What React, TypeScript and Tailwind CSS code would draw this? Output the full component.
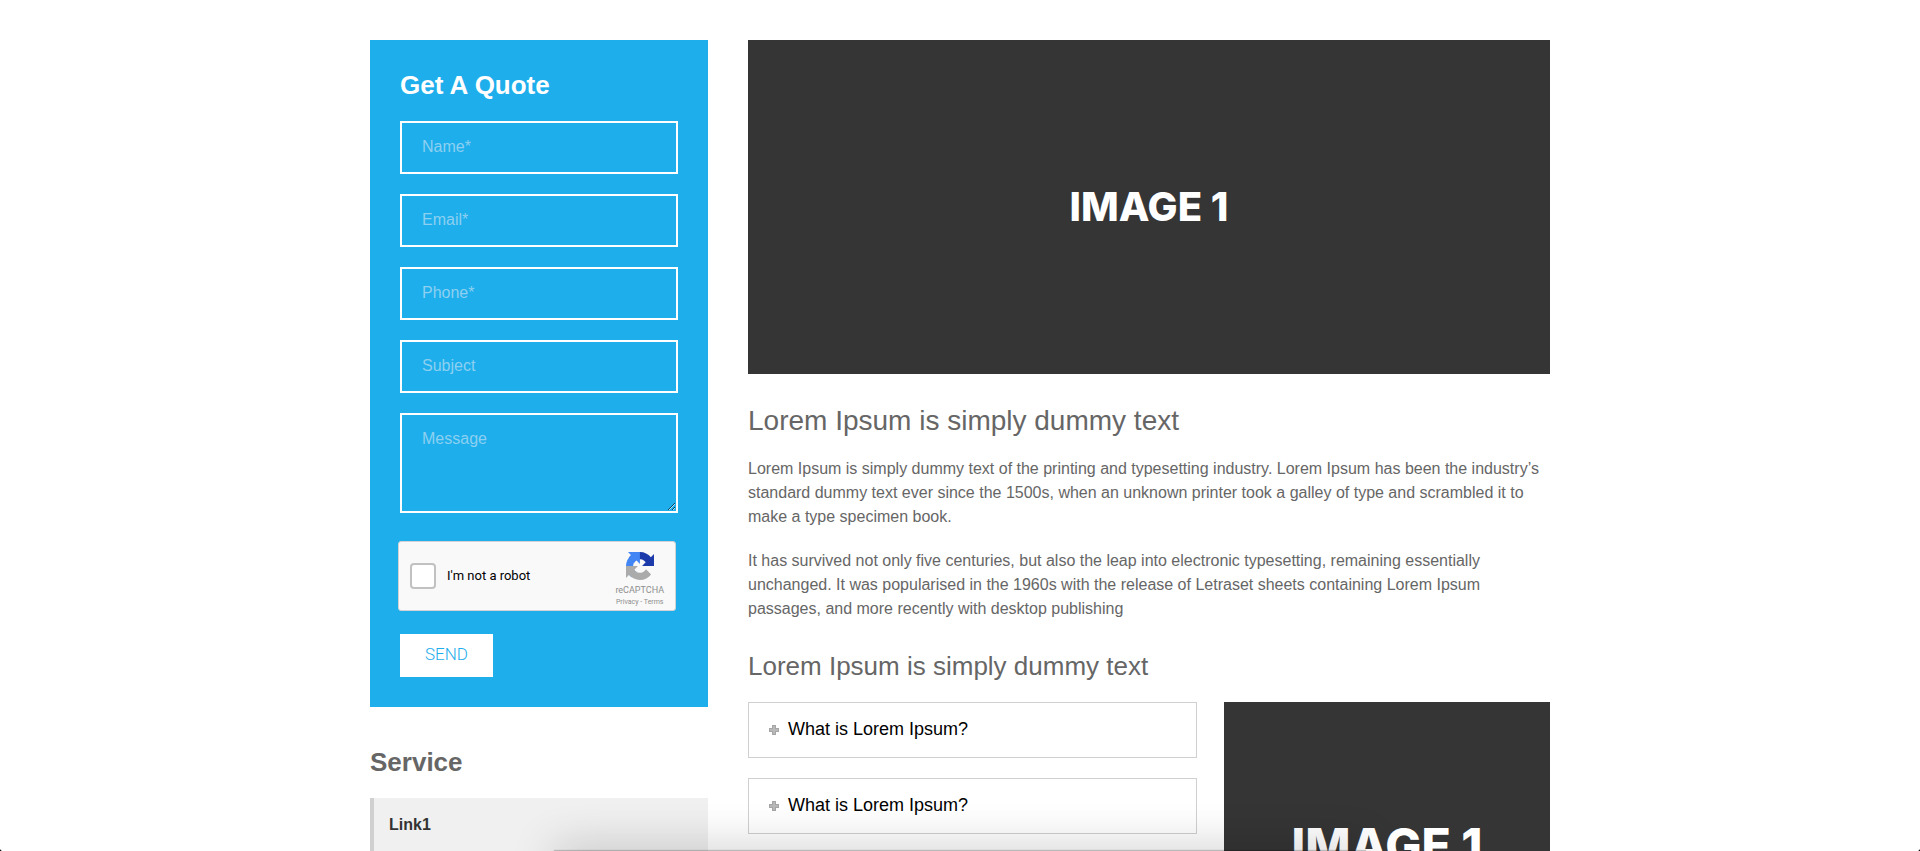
import type { ReactNode } from "react";

const fields = [
  { id: "name", label: "Name*", type: "text" },
  { id: "email", label: "Email*", type: "email" },
  { id: "phone", label: "Phone*", type: "tel" },
  { id: "subject", label: "Subject", type: "text" },
];

const fieldStyle =
  "block w-full border-2 border-white bg-transparent px-5 text-base text-white placeholder:text-[#8dd0f0] outline-none";

function RecaptchaLogo() {
  return (
    <svg viewBox="0 0 64 64" className="size-7" aria-hidden="true">
      <path
        fill="#1c3aa9"
        d="M64 31.955l-.033-1.37V4.687l-7.16 7.16C50.948 4.674 42.033.093 32.05.093c-10.4 0-19.622 4.96-25.458 12.64l11.736 11.86a15.55 15.55 0 0 1 4.754-5.334c2.05-1.6 4.952-2.906 8.968-2.906.485 0 .86.057 1.135.163 4.976.393 9.288 3.14 11.828 7.124l-8.307 8.307L64 31.953"
      />
      <path
        fill="#4285f4"
        d="M31.862.094l-1.37.033H4.594l7.16 7.16C4.58 13.147 0 22.06 0 32.046c0 10.4 4.96 19.622 12.64 25.458L24.5 45.768a15.55 15.55 0 0 1-5.334-4.754c-1.6-2.05-2.906-4.952-2.906-8.968 0-.485.057-.86.163-1.135.393-4.976 3.14-9.288 7.124-11.828l8.307 8.307L31.86.095"
      />
      <path
        fill="#ababab"
        d="M.001 32.045l.033 1.37v25.898l7.16-7.16c5.86 7.173 14.774 11.754 24.76 11.754 10.4 0 19.622-4.96 25.458-12.64l-11.736-11.86a15.55 15.55 0 0 1-4.754 5.334c-2.05 1.6-4.952 2.906-8.968 2.906-.485 0-.86-.057-1.135-.163-4.976-.393-9.288-3.14-11.828-7.124l8.307-8.307c-10.522.04-22.4.066-27.295-.005"
      />
    </svg>
  );
}

function Recaptcha() {
  return (
    <div className="-ml-0.5 mr-0.5 mt-7 flex h-[70px] items-center rounded-[3px] border border-[#d3d3d3] bg-[#f9f9f9] pl-[11px] pr-[11px] font-[Roboto,sans-serif]">
      <input
        id="robot"
        type="checkbox"
        className="size-[26px] appearance-none rounded-sm border-2 border-[#c1c1c1] bg-white"
      />
      <label htmlFor="robot" className="ml-[11px] text-[13px] text-black">
        I'm not a robot
      </label>
      <div className="ml-auto flex flex-col items-center pt-2 text-[#8e8e8e]">
        <RecaptchaLogo />
        <span className="mt-1 text-[9px] leading-3">reCAPTCHA</span>
        <span className="text-[7px] leading-3">
          <a href="#privacy">Privacy</a> - <a href="#terms">Terms</a>
        </span>
      </div>
    </div>
  );
}

function QuoteForm() {
  return (
    <form className="bg-[#1eaeec] p-[30px]">
      <h2 className="mb-[21px] text-[26px] font-bold leading-[30px] text-white">Get A Quote</h2>
      <div className="space-y-5">
        {fields.map((field) => (
          <input
            key={field.id}
            id={field.id}
            type={field.type}
            placeholder={field.label}
            aria-label={field.label}
            className={`${fieldStyle} h-[53px] pb-0.5`}
          />
        ))}
        <textarea
          id="message"
          placeholder="Message"
          aria-label="Message"
          className={`${fieldStyle} h-[100px] resize py-3`}
        />
      </div>
      <Recaptcha />
      <button
        type="submit"
        className="mt-[23px] block h-[43px] bg-white px-[25px] pb-0.5 font-[Roboto,sans-serif] text-[17px] font-light text-[#1eaeec]"
      >
        SEND
      </button>
    </form>
  );
}

function PlaceholderImage({ className, children }: { className: string; children: ReactNode }) {
  return (
    <div
      role="img"
      aria-label="Image 1"
      className={`flex items-center justify-center whitespace-nowrap bg-[#353535] font-[Inter,sans-serif] font-extrabold text-white ${className}`}
    >
      {children}
    </div>
  );
}

function AccordionItem({ title }: { title: string }) {
  return (
    <button
      type="button"
      className="flex h-14 w-full items-center border border-[#d0d0d0] bg-white px-5 text-left text-lg text-black"
    >
      <svg viewBox="0 0 10 10" className="mr-[9px] size-2.5" aria-hidden="true">
        <path d="M3 0h4v3h3v4h-3v3h-4v-3h-3v-4h3z" fill="#a6a6a6" />
        <path d="M4 1h2v3h3v2h-3v3h-2v-3h-3v-2h3z" fill="#b9b9b9" />
      </svg>
      <span className="pb-0.5">{title}</span>
    </button>
  );
}

export default function App() {
  return (
    <div className="relative h-screen overflow-hidden bg-white font-['Liberation_Sans',Arial,sans-serif] text-[#666]">
      <div className="mx-auto flex max-w-[1180px] items-start gap-10 pt-10">
        <aside className="w-[338px] shrink-0">
          <QuoteForm />
          <h2 className="mb-5 mt-10 text-[26px] font-bold leading-[31px]">Service</h2>
          <nav>
            <a
              href="#link1"
              className="block border-l-4 border-[#d0d0d0] bg-[#f0f0f0] px-[15px] py-[15px] text-base font-bold text-[#333]"
            >
              Link1
            </a>
          </nav>
        </aside>

        <main className="min-w-0 flex-1">
          <PlaceholderImage className="h-[334px] text-[40px]">IMAGE 1</PlaceholderImage>
          <h1 className="mt-[31px] text-[28px] leading-8">Lorem Ipsum is simply dummy text</h1>
          <p className="mt-5 text-base">
            Lorem Ipsum is simply dummy text of the printing and typesetting industry. Lorem Ipsum has been the
            industry’s standard dummy text ever since the 1500s, when an unknown printer took a galley of type and
            scrambled it to make a type specimen book.
          </p>
          <p className="mt-5 text-base">
            It has survived not only five centuries, but also the leap into electronic typesetting, remaining
            essentially unchanged. It was popularised in the 1960s with the release of Letraset sheets containing
            Lorem Ipsum passages, and more recently with desktop publishing
          </p>
          <h2 className="mb-[21px] mt-[30px] text-[26px] leading-[30px]">Lorem Ipsum is simply dummy text</h2>
          <div className="flex items-start gap-[27px]">
            <div className="flex-1 space-y-5">
              <AccordionItem title="What is Lorem Ipsum?" />
              <AccordionItem title="What is Lorem Ipsum?" />
            </div>
            <PlaceholderImage className="h-[288px] w-[326px] shrink-0 text-[48px]">IMAGE 1</PlaceholderImage>
          </div>
        </main>
      </div>

      <div className="pointer-events-none absolute -bottom-5 left-[555px] right-[555px] h-5 shadow-[0_0_45px_rgba(0,0,0,0.3),0_0_1px_1px_rgba(0,0,0,0.2)]" />
      <div className="pointer-events-none absolute bottom-0 left-0 size-1 bg-[radial-gradient(circle_at_100%_0,transparent_4px,black_5px)]" />
      <div className="pointer-events-none absolute bottom-0 right-0 size-1 bg-[radial-gradient(circle_at_0_0,transparent_4px,black_5px)]" />
    </div>
  );
}
